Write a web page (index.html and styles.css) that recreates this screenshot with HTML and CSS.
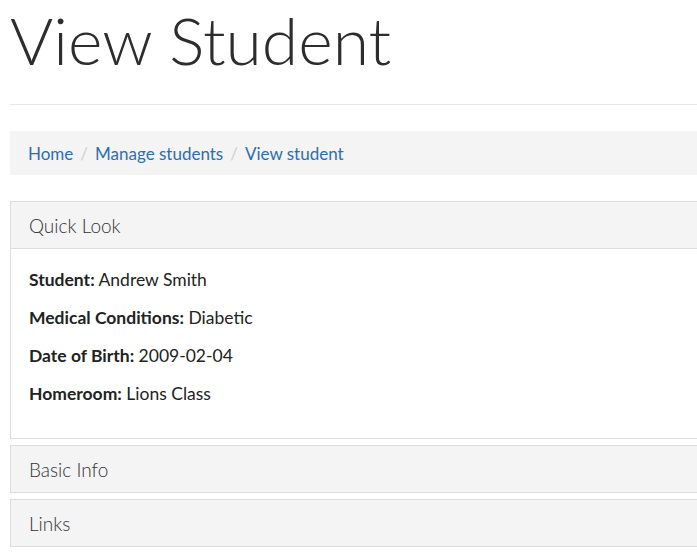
FILE: index.html
```html
<!DOCTYPE html>
<html>
<head>
<meta charset="utf-8">
<link rel="stylesheet" href="styles.css">
</head>
<body>
<div class="page">
  <div class="page-header">
    <h1 class="title">View Student</h1>
  </div>
  <ol class="breadcrumb">
    <li><a href="#">Home</a></li>
    <li class="sep">/</li>
    <li><a href="#">Manage students</a></li>
    <li class="sep">/</li>
    <li><a href="#">View student</a></li>
  </ol>
  <div class="panel">
    <div class="panel-heading">Quick Look</div>
    <div class="panel-body">
      <p><b>Student:</b> Andrew Smith</p>
      <p><b>Medical Conditions:</b> Diabetic</p>
      <p><b>Date of Birth:</b> 2009-02-04</p>
      <p><b>Homeroom:</b> Lions Class</p>
    </div>
  </div>
  <div class="panel">
    <div class="panel-heading collapsed">Basic Info</div>
  </div>
  <div class="panel">
    <div class="panel-heading collapsed">Links</div>
  </div>
</div>
</body>
</html>
```

FILE: styles.css
```css
html, body {
  margin: 0;
  padding: 0;
  overflow: hidden;
  background: #fff;
}
body {
  font-family: "Lato", "Open Sans", sans-serif;
  color: #222;
}
.page {
  margin-left: 10px;
  width: 1100px;
}
.page-header {
  padding-top: 2px;
  padding-bottom: 26px;
  border-bottom: 1px solid #e6e6e6;
  margin-bottom: 26px;
}
.title {
  margin: 0;
  font-size: 66px;
  font-weight: 300;
  line-height: 76px;
  color: #2d2d2d;
}
.breadcrumb {
  list-style: none;
  margin: 0 0 26px 0;
  padding: 0 18px;
  height: 44px;
  display: flex;
  align-items: center;
  gap: 7px;
  background: #f4f4f4;
  font-size: 17px;
}
.breadcrumb a {
  color: #2c6db5;
  text-decoration: none;
}
.breadcrumb .sep {
  color: #cfcfcf;
}
.panel {
  border: 1px solid #dddddd;
  border-right: none;
  margin-bottom: 6px;
}
.panel-heading {
  background: #f4f4f4;
  height: 46px;
  display: flex;
  align-items: center;
  padding-left: 18px;
  font-size: 19px;
  font-weight: 300;
  color: #333;
  border-bottom: 1px solid #dddddd;
}
.panel-heading.collapsed {
  border-bottom: none;
}
.panel-body {
  padding: 20px 18px 33px;
  font-size: 17.5px;
}
.panel-body p {
  margin: 0 0 16px 0;
  line-height: 22px;
}
.panel-body p:last-child {
  margin-bottom: 0;
}
.panel-body b {
  font-weight: 700;
}
```
